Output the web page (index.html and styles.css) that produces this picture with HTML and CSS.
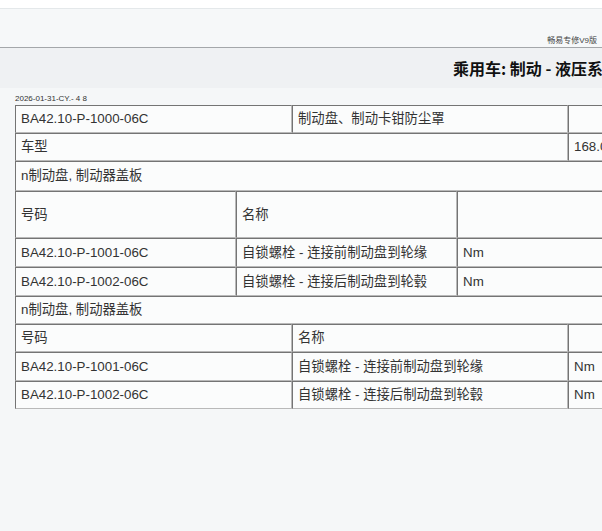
FILE: index.html
```html
<!DOCTYPE html>
<html lang="zh-CN">
<head>
<meta charset="utf-8">
<title>乘用车: 制动 - 液压系统</title>
<link rel="stylesheet" href="styles.css">
</head>
<body>
<header class="topbar">
  <div class="topbar-inner"><span class="brand">畅易专修V9版</span></div>
</header>
<div class="titlebar"><h1 class="title">乘用车: 制动 - 液压系统</h1></div>
<main class="content">
  <div class="stamp">2026-01-31-CY.- 4 8</div>
  <table class="grid">
    <colgroup><col class="c1"><col class="c2"><col class="c3"></colgroup>
    <tr class="h28"><td>BA42.10-P-1000-06C</td><td>制动盘、制动卡钳防尘罩</td><td></td></tr>
    <tr class="h28"><td colspan="2">车型</td><td>168.0</td></tr>
    <tr class="h30"><td colspan="3">n制动盘, 制动器盖板</td></tr>
  </table>
  <table class="grid">
    <colgroup><col class="e"><col class="e"><col class="e"></colgroup>
    <tr class="h47"><td>号码</td><td>名称</td><td></td></tr>
    <tr class="h29"><td>BA42.10-P-1001-06C</td><td>自锁螺栓 - 连接前制动盘到轮缘</td><td>Nm</td></tr>
    <tr class="h29"><td>BA42.10-P-1002-06C</td><td>自锁螺栓 - 连接后制动盘到轮毂</td><td>Nm</td></tr>
  </table>
  <table class="grid">
    <colgroup><col class="c1"><col class="c2"><col class="c3"></colgroup>
    <tr class="h28"><td colspan="3">n制动盘, 制动器盖板</td></tr>
    <tr class="h28"><td>号码</td><td>名称</td><td></td></tr>
    <tr class="h29"><td>BA42.10-P-1001-06C</td><td>自锁螺栓 - 连接前制动盘到轮缘</td><td>Nm</td></tr>
    <tr class="h28"><td>BA42.10-P-1002-06C</td><td>自锁螺栓 - 连接后制动盘到轮毂</td><td>Nm</td></tr>
  </table>
</main>
</body>
</html>
```
FILE: styles.css
```css
html, body {
  overflow-x: hidden;
}
body {
  margin: 0;
  background: #f5f7f8;
  color: #333;
  font-family: "Liberation Sans", Arial, "Noto Sans CJK SC", sans-serif;
}
.topbar {
  background: #fff;
  padding-top: 8px;
}
.topbar-inner {
  height: 38px;
  background: #f6f8f9;
  border-top: 1px solid #e4e8ea;
  border-bottom: 1px solid #a4a7aa;
  display: flex;
  justify-content: flex-end;
  align-items: flex-end;
  padding-right: 5px;
}
.brand {
  font-size: 8px;
  line-height: 10px;
  padding-bottom: 1px;
  color: #444;
}
.titlebar {
  background: #eff1f3;
  height: 40px;
  padding-left: 453px;
  white-space: nowrap;
}
.title {
  margin: 0;
  font-size: 16px;
  line-height: 40px;
  font-weight: bold;
  color: #111;
  font-family: "Noto Sans CJK SC", "Liberation Sans", sans-serif;
}
.content {
  padding: 5px 0 0 15px;
}
.stamp {
  font-size: 8px;
  line-height: 12px;
  height: 12px;
  color: #333;
}
.grid {
  width: 663px;
  table-layout: fixed;
  border-collapse: separate;
  border-spacing: 0;
  font-size: 13.33px;
}
.grid .c1 { width: 277px; }
.grid .c2 { width: 276px; }
.grid .c3 { width: 110px; }
.grid .e { width: 221px; }
.grid td {
  box-sizing: border-box;
  padding: 0 5px;
  vertical-align: middle;
  background: #fbfcfc;
  border: 1px solid;
  border-color: #747474 #b9b9b9 #b9b9b9 #747474;
  white-space: nowrap;
  overflow: hidden;
  line-height: 18px;
}
.h28 td { height: 28px; }
.h29 td { height: 29px; }
.h30 td { height: 30px; }
.h47 td { height: 47px; }
```
